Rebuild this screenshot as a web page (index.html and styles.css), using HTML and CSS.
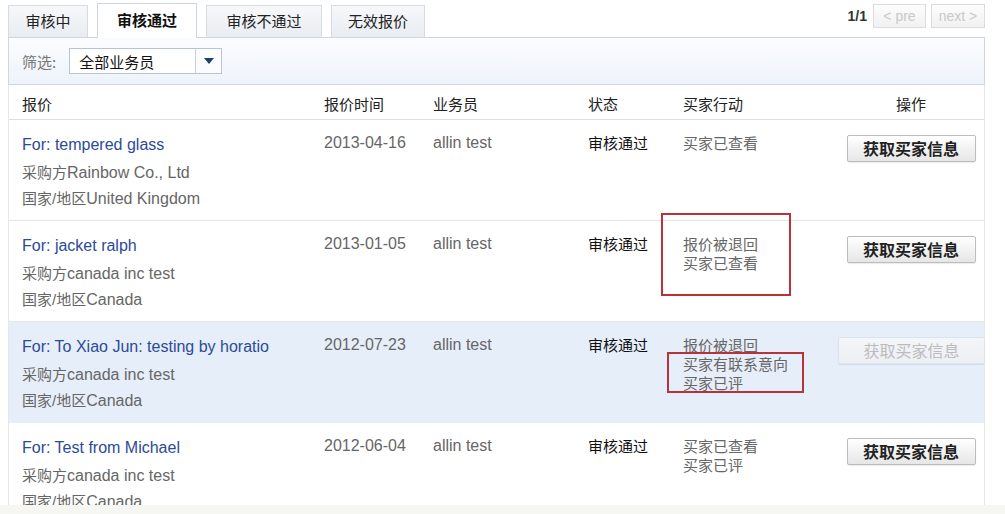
FILE: index.html
```html
<!DOCTYPE html>
<html lang="zh-CN">
<head>
<meta charset="utf-8">
<title>报价管理</title>
<link rel="stylesheet" href="styles.css">
</head>
<body>
<div class="page">
  <div class="topbar">
    <div class="tabs">
      <div class="tab w80">审核中</div>
      <div class="tab active w100">审核通过</div>
      <div class="tab w116">审核不通过</div>
      <div class="tab w94">无效报价</div>
    </div>
    <div class="pager">
      <span class="count">1/1</span>
      <span class="pbtn w53">&lt; pre</span>
      <span class="pbtn w54">next &gt;</span>
    </div>
  </div>
  <div class="panel">
    <div class="filter">
      <span class="flabel">筛选:</span>
      <div class="select">
        <span class="sval">全部业务员</span>
        <span class="sarrow"><svg width="10" height="6" viewBox="0 0 10 6"><path d="M0 0H10L5 6Z" fill="#1f3f6e"/></svg></span>
      </div>
    </div>
    <div class="grid thead">
      <div>报价</div>
      <div>报价时间</div>
      <div>业务员</div>
      <div>状态</div>
      <div>买家行动</div>
      <div class="center">操作</div>
    </div>

    <div class="grid row">
      <div class="info">
        <a class="title">For: tempered glass</a>
        <div><span class="zh">采购方</span>Rainbow Co., Ltd</div>
        <div><span class="zh">国家/地区</span>United Kingdom</div>
      </div>
      <div class="cell">2013-04-16</div>
      <div class="cell">allin test</div>
      <div class="cell status">审核通过</div>
      <div class="actions"><div>买家已查看</div></div>
      <div class="op"><button class="btn">获取买家信息</button></div>
    </div>

    <div class="grid row">
      <div class="info">
        <a class="title">For: jacket ralph</a>
        <div><span class="zh">采购方</span>canada inc test</div>
        <div><span class="zh">国家/地区</span>Canada</div>
      </div>
      <div class="cell">2013-01-05</div>
      <div class="cell">allin test</div>
      <div class="cell status">审核通过</div>
      <div class="actions"><div>报价被退回</div><div>买家已查看</div></div>
      <div class="op"><button class="btn">获取买家信息</button></div>
      <div class="mark mark1"></div>
    </div>

    <div class="grid row hl">
      <div class="info">
        <a class="title">For: To Xiao Jun: testing by horatio</a>
        <div><span class="zh">采购方</span>canada inc test</div>
        <div><span class="zh">国家/地区</span>Canada</div>
      </div>
      <div class="cell">2012-07-23</div>
      <div class="cell">allin test</div>
      <div class="cell status">审核通过</div>
      <div class="actions"><div>报价被退回</div><div>买家有联系意向</div><div>买家已评</div></div>
      <div class="op"><button class="btn disabled" disabled>获取买家信息</button></div>
      <div class="mark mark2"></div>
    </div>

    <div class="grid row">
      <div class="info">
        <a class="title">For: Test from Michael</a>
        <div><span class="zh">采购方</span>canada inc test</div>
        <div><span class="zh">国家/地区</span>Canada</div>
      </div>
      <div class="cell">2012-06-04</div>
      <div class="cell">allin test</div>
      <div class="cell status">审核通过</div>
      <div class="actions"><div>买家已查看</div><div>买家已评</div></div>
      <div class="op"><button class="btn">获取买家信息</button></div>
    </div>
  </div>
</div>
<div class="band"></div>
</body>
</html>
```

FILE: styles.css
```css
html, body {
  margin: 0;
  padding: 0;
  background: #fff;
}
body {
  font-family: "Liberation Sans", Arial, "Noto Sans CJK SC", sans-serif;
  font-size: 15px;
  color: #666;
  width: 1005px;
  height: 514px;
  overflow: hidden;
}
.page {
  height: 505px;
  overflow: hidden;
  padding: 0 20px 0 8px;
}
.topbar {
  height: 37px;
  display: flex;
  justify-content: space-between;
  align-items: flex-end;
}
.tabs {
  display: flex;
  align-items: flex-end;
  gap: 9px;
}
.tab {
  height: 32px;
  box-sizing: border-box;
  border: 1px solid #d6dbe2;
  border-bottom: none;
  background: linear-gradient(#f7f8fa, #e8ecf1);
  color: #222;
  display: flex;
  align-items: center;
  justify-content: center;
  font-size: 15px;
  padding-bottom: 2px;
}
.tab.active {
  height: 35px;
  background: #fff;
  border-color: #cfd5de;
  font-weight: bold;
  color: #111;
  margin-bottom: -1px;
  position: relative;
  z-index: 1;
  padding-bottom: 4px;
}
.w80 { width: 80px; }
.w100 { width: 100px; }
.w116 { width: 116px; }
.w94 { width: 94px; }
.pager {
  display: flex;
  align-items: center;
  gap: 5px;
  margin-bottom: 9px;
}
.count {
  font-weight: bold;
  font-size: 14px;
  color: #333;
  margin-right: 1px;
}
.pbtn {
  height: 24px;
  box-sizing: border-box;
  border: 1px solid #dcdcdc;
  background: linear-gradient(#fdfdfd, #f1f1f1);
  color: #c9c9c9;
  font-size: 14px;
  display: flex;
  align-items: center;
  justify-content: center;
}
.w53 { width: 53px; }
.w54 { width: 54px; }
.panel {
  border-left: 1px solid #e4e7eb;
  border-right: 1px solid #e4e7eb;
}
.filter {
  height: 48px;
  box-sizing: border-box;
  border: 1px solid #cfd6e0;
  margin: 0 -1px;
  background: linear-gradient(#fbfcfe, #eef3fb);
  display: flex;
  align-items: center;
  padding-left: 13px;
}
.flabel {
  color: #777;
  font-size: 15px;
  font-family: "Noto Sans CJK SC", sans-serif;
}
.select {
  margin-left: 13px;
  width: 153px;
  height: 26px;
  box-sizing: border-box;
  border: 1px solid #b9c4d3;
  background: #fff;
  display: flex;
  align-items: stretch;
}
.sval {
  flex: 1;
  padding-left: 9px;
  color: #111;
  display: flex;
  align-items: center;
  font-size: 15px;
}
.sarrow {
  width: 25px;
  border-left: 1px solid #c8d0dc;
  display: flex;
  align-items: center;
  justify-content: center;
  background: #fbfcfe;
}
.grid {
  display: grid;
  grid-template-columns: 302px 109px 155px 95px 155px 1fr;
  padding-left: 13px;
  position: relative;
}
.thead {
  height: 35px;
  align-items: center;
  color: #222;
  font-size: 15px;
  border-bottom: 1px solid #dedede;
  padding-top: 2px;
  box-sizing: border-box;
}
.center { text-align: center; }
.row {
  height: 101px;
  box-sizing: border-box;
  border-bottom: 1px solid #e6e6e6;
  align-items: start;
}
.row.hl {
  background: #e6eefa;
  border-bottom-color: #e6eefa;
}
.info {
  padding-top: 13px;
  line-height: 26px;
  font-size: 16px;
}
.zh {
  font-size: 15px;
}
.title {
  display: block;
  color: #2b4b98;
  text-decoration: none;
  line-height: 24px;
  margin-bottom: 3px;
}
.cell {
  padding-top: 13px;
  line-height: 20px;
  font-size: 16px;
}
.status {
  color: #111;
  font-size: 15px;
  padding-top: 14px;
}
.actions {
  padding-top: 14px;
  line-height: 19px;
}
.op {
  display: flex;
  justify-content: center;
  padding-top: 15px;
}
.btn {
  width: 129px;
  height: 27px;
  border: 1px solid #bdbdbd;
  border-radius: 2px;
  background: linear-gradient(#ffffff, #e6e6e6);
  box-shadow: 0 1px 1px rgba(0,0,0,0.08);
  font-family: "Noto Sans CJK SC", sans-serif;
  font-weight: bold;
  font-size: 16px;
  color: #222;
  padding: 0;
  line-height: 25px;
}
.btn.disabled {
  width: 147px;
  border-color: #dde3ea;
  background: linear-gradient(#f4f6f9, #eceff3);
  color: #bcbcbc;
  font-weight: normal;
}
.mark {
  position: absolute;
  border: 2px solid #b8323c;
  box-sizing: border-box;
}
.mark1 {
  left: 652px;
  top: -8px;
  width: 130px;
  height: 83px;
}
.mark2 {
  left: 658px;
  top: 30px;
  width: 137px;
  height: 41px;
}
.band {
  height: 9px;
  background: #f6f6f2;
}
```
